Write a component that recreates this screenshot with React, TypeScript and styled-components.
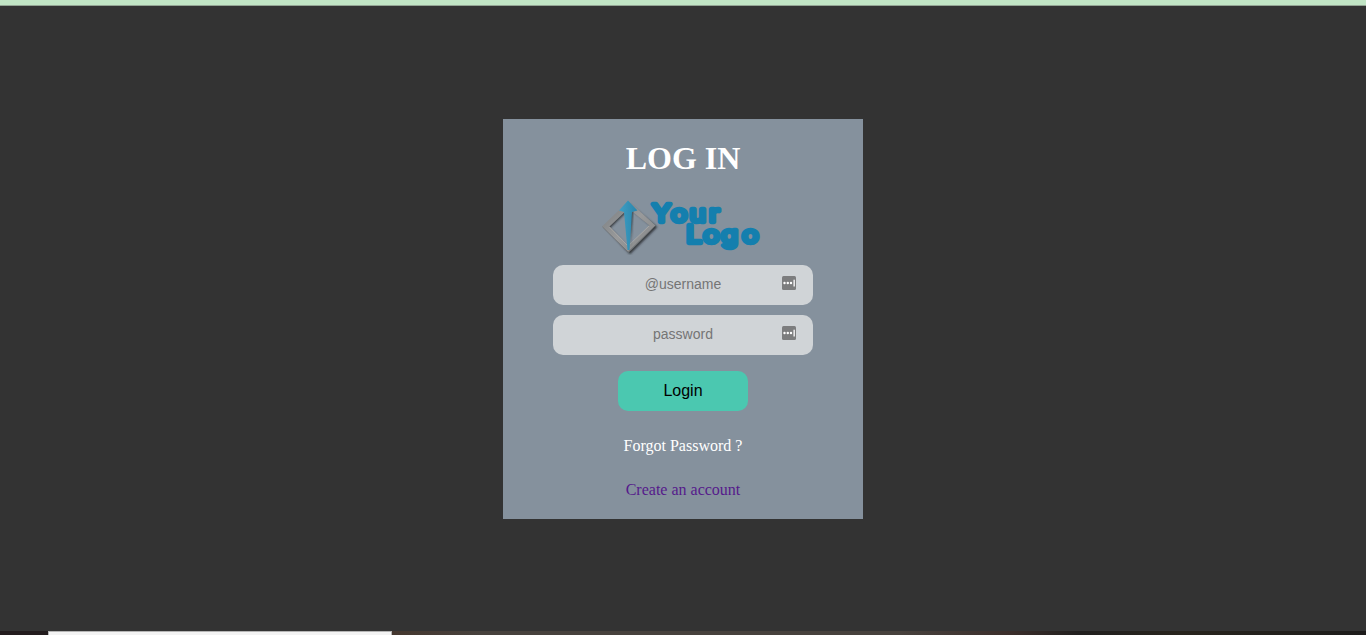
import React from "react";
import styled, { createGlobalStyle } from "styled-components";

const GlobalStyle = createGlobalStyle`
  * { box-sizing: border-box; }
  body { margin: 0; background: #333; overflow: hidden; }
`;

const Page = styled.div`
  display: flex;
  flex-direction: column;
  height: 635px;
  font-family: "Liberation Serif", "Times New Roman", serif;
`;

const TopStrip = styled.div`
  height: 6px;
  flex: none;
  background: #c1e5c5;
  border-bottom: 1px solid #93a594;
`;

const Main = styled.main`
  flex: 1;
  display: flex;
  justify-content: center;
  align-items: flex-start;
  padding-top: 113px;
`;

const Taskbar = styled.footer`
  display: flex;
  flex: none;
  height: 4px;
  background: linear-gradient(90deg, #231c1e 0, #231c1e 48px, #453830 400px, #47413d 480px, #47413d 900px, #3b2e2b 1010px, #211f1e 1080px, #28241d 1180px, #1d1c1b 1366px);
`;

const SearchBox = styled.div`
  width: 344px;
  margin-left: 48px;
  background: #f3f3f3;
  border: 1px solid #b5b5b5;
  border-bottom: 0;
`;

const Card = styled.form`
  display: flex;
  flex-direction: column;
  align-items: center;
  width: 360px;
  height: 400px;
  background: #85919d;
  & > * { flex: none; }
`;

const Title = styled.h1`
  margin: 21px 0 20px;
  font-size: 32px;
  line-height: 37px;
  color: #fff;
`;

const Logo = styled.svg`
  display: block;
  width: 166px;
  height: 58px;
`;

const Field = styled.label`
  position: relative;
  display: block;
  width: 260px;
  height: 40px;
  margin-top: 10px;
`;

const Input = styled.input`
  display: block;
  width: 100%;
  height: 100%;
  padding: 0 0 2px;
  border: 0;
  border-radius: 10px;
  background: #d0d4d7;
  text-align: center;
  font: 14px "Liberation Sans", Arial, sans-serif;
  &::placeholder { color: #757575; opacity: 1; }
`;

const FieldIcon = styled.svg`
  position: absolute;
  top: 11px;
  right: 17px;
  width: 14px;
  height: 14px;
`;

const LoginButton = styled.button`
  width: 130px;
  height: 40px;
  margin: 16px 0 26px;
  padding: 0;
  border: 0;
  border-radius: 10px;
  background: #4bc8b0;
  color: #000;
  font: 16px "Liberation Sans", Arial, sans-serif;
`;

const Link = styled.a<{ $color: string }>`
  margin-bottom: 26px;
  font-size: 16px;
  line-height: 18px;
  color: ${(p) => p.$color};
  text-decoration: none;
`;

const PasswordManagerIcon = () => (
  <FieldIcon viewBox="0 0 14 14">
    <rect width="14" height="14" rx="1.5" fill="#7c7d7e" />
    <g fill="#fff">
      <circle cx="2.5" cy="7" r="1.2" />
      <circle cx="5.8" cy="7" r="1.2" />
      <circle cx="9" cy="7" r="1.2" />
      <rect x="11.5" y="3.7" width="1.3" height="6.8" />
    </g>
  </FieldIcon>
);

const BrandLogo = () => (
  <Logo viewBox="600 197 166 58">
    <defs>
      <linearGradient id="steel" x1="0" y1="0" x2="1" y2="1">
        <stop offset="0" stopColor="#777b7e" />
        <stop offset=".5" stopColor="#999a9b" />
        <stop offset="1" stopColor="#808284" />
      </linearGradient>
      <linearGradient id="needle" x1="0" x2="1">
        <stop offset="0" stopColor="#409ec3" />
        <stop offset="1" stopColor="#2785ad" />
      </linearGradient>
      <filter id="soft" x="-20%" y="-20%" width="140%" height="140%">
        <feGaussianBlur stdDeviation=".8" />
      </filter>
    </defs>
    <g filter="url(#soft)" fill="none" stroke="#303438" strokeWidth="3">
      <path d="M630 206.5 L655 227 L630 252 L608 228 Z" />
    </g>
    <path fillRule="evenodd" fill="url(#steel)" d="M628.5 201 L655.5 225.5 L628.5 252.5 L602 226.5 Z M628.5 208.5 L609.5 226.5 L628.5 246 L649.5 225.5 Z" />
    <path d="M609.5 227 L628 246 L649 226" fill="none" stroke="#b2afab" strokeWidth=".7" />
    <path d="M602.5 227 L628 252 L655 226" fill="none" stroke="#64686a" strokeWidth=".6" />
    <path d="M630 211 L633 211 L630.5 247 Z" fill="#2a383f" filter="url(#soft)" />
    <path d="M628 200.5 L637.5 210.5 L632 212 L629.5 250 L627.5 250 L624 212 L619 210.5 Z" fill="url(#needle)" />
    <g
      transform="translate(650 0) scale(1.15 1)"
      fill="#147fae"
      stroke="#147fae"
      strokeWidth="4.4"
      strokeLinejoin="round"
      strokeLinecap="round"
      fontFamily="Inter, sans-serif"
      fontSize="24"
    >
      <text x="1.7 18.1 34.4 51.2" y="222.3">Your</text>
      <text x="31.6 46 61.7 80" y="243.2">Logo</text>
    </g>
  </Logo>
);

export default function App() {
  return (
    <Page>
      <GlobalStyle />
      <TopStrip />
      <Main>
        <Card onSubmit={(e) => e.preventDefault()}>
          <Title>LOG IN</Title>
          <BrandLogo />
          <Field>
            <Input placeholder="@username" />
            <PasswordManagerIcon />
          </Field>
          <Field>
            <Input type="password" placeholder="password" />
            <PasswordManagerIcon />
          </Field>
          <LoginButton>Login</LoginButton>
          <Link $color="#fff" href="#">Forgot Password ?</Link>
          <Link $color="#551a8b" href="#">Create an account</Link>
        </Card>
      </Main>
      <Taskbar>
        <SearchBox />
      </Taskbar>
    </Page>
  );
}
